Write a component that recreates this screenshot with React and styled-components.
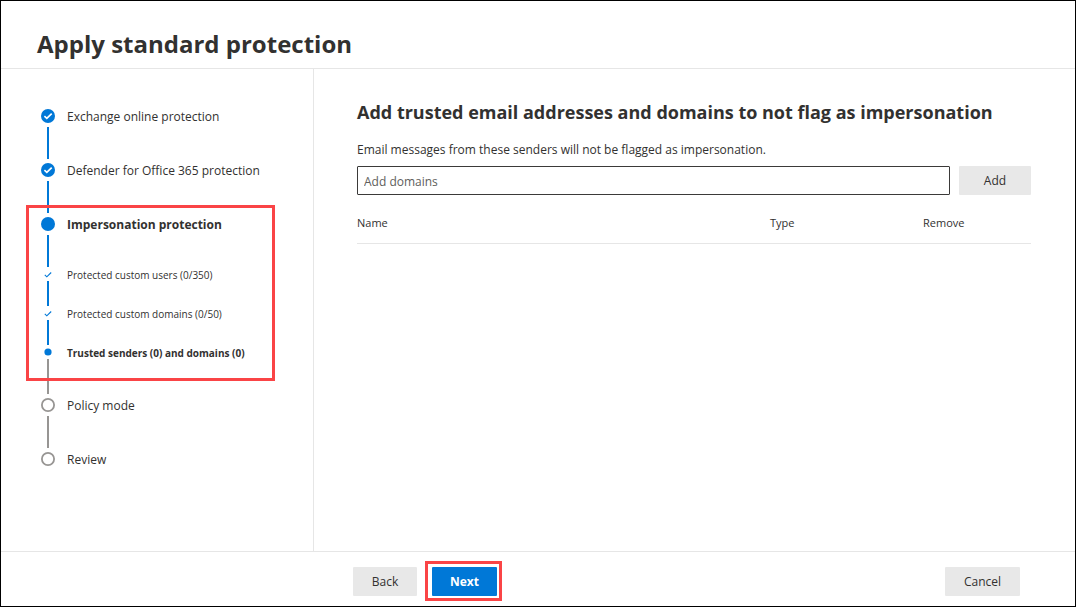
import React, { useState } from "react";
import styled, { createGlobalStyle } from "styled-components";

const colors = {
  text: "#323130",
  line: "#e6e6e6",
  primary: "#0078d7",
  pending: "#979593",
  button: "#e8e8e8",
  callout: "#fa4446",
};

const GlobalStyle = createGlobalStyle`
  *, *::before, *::after { box-sizing: border-box; }
  body {
    margin: 0;
    background: #fff;
    color: ${colors.text};
    font-family: "Segoe UI", "Open Sans", "Noto Sans", sans-serif;
    font-size: 12px;
    line-height: 16px;
  }
`;

const Frame = styled.div`
  min-height: 100vh;
  display: grid;
  grid-template-rows: auto 1fr auto;
  border: 1px solid #000;
`;

const Header = styled.header`
  padding: 27px 36px 8px;
  border-bottom: 1px solid ${colors.line};
`;

const Title = styled.h1`
  margin: 0;
  font-size: 24px;
  line-height: 32px;
  font-weight: 700;
`;

const Body = styled.div`
  display: grid;
  grid-template-columns: 313px minmax(0, 1fr);
`;

const Sidebar = styled.nav`
  padding: 36px 38px 36px 40px;
  border-right: 1px solid ${colors.line};
`;

const StepList = styled.ol`
  margin: 0;
  padding: 0;
  list-style: none;
`;

const StepItem = styled.li`
  position: relative;
`;

const StepRow = styled.div`
  display: flex;
  gap: 12px;
`;

const Rail = styled.div`
  width: 14px;
  display: flex;
  flex-direction: column;
  align-items: center;
`;

const Marker = styled.span`
  height: ${(p) => (p.$small ? 14 : 22)}px;
  display: grid;
  place-items: center;

  svg { display: block; }
`;

const Connector = styled.span`
  width: 2px;
  height: ${(p) => p.$length}px;
  background: ${(p) => (p.$pending ? colors.pending : colors.primary)};
`;

const StepLabel = styled.span`
  font-size: ${(p) => (p.$small ? 10 : 12)}px;
  line-height: ${(p) => (p.$small ? 16 : 24)}px;
  font-weight: ${(p) => (p.$current ? 700 : 400)};
  white-space: nowrap;
`;

const Callout = styled.span`
  position: absolute;
  inset: ${(p) => p.$inset};
  border: 3px solid ${colors.callout};
  pointer-events: none;
`;

const Content = styled.main`
  padding: 31px 44px 32px 43px;
`;

const Heading = styled.h2`
  margin: 0 0 17px;
  font-size: 18px;
  line-height: 24px;
  font-weight: 700;
`;

const FieldLabel = styled.label`
  display: block;
  margin-bottom: 8px;
  line-height: 17px;
`;

const FieldRow = styled.div`
  display: flex;
  gap: 9px;
`;

const TextField = styled.input`
  flex: 1;
  min-width: 0;
  height: 29px;
  padding: 2px 6px 0;
  border: 1px solid #3b3a39;
  border-radius: 1px;
  background: #fff;
  color: ${colors.text};
  font: inherit;

  &::placeholder { color: #605e5c; opacity: 1; }
`;

const Button = styled.button`
  width: ${(p) => p.$width}px;
  height: 29px;
  padding: 0;
  border: 0;
  border-radius: 1px;
  background: ${(p) => (p.$primary ? colors.primary : colors.button)};
  color: ${(p) => (p.$primary ? "#fff" : colors.text)};
  font-family: inherit;
  font-size: 12px;
  line-height: 16px;
  font-weight: ${(p) => (p.$primary ? 700 : 500)};
  cursor: pointer;
`;

const Table = styled.table`
  width: 100%;
  margin-top: 8px;
  border-collapse: collapse;
  table-layout: fixed;
`;

const ColumnHead = styled.th`
  width: ${(p) => p.$width};
  height: 40px;
  padding: 0;
  border-bottom: 1px solid ${colors.line};
  font-size: 11px;
  font-weight: 400;
  text-align: left;
`;

const Footer = styled.footer`
  display: flex;
  align-items: center;
  gap: 15px;
  padding: 15px 55px 10px 352px;
  border-top: 1px solid ${colors.line};
`;

const ButtonSlot = styled.span`
  position: relative;
  display: flex;
  margin-left: ${(p) => (p.$end ? "auto" : "0")};
`;

function MarkerIcon({ state, small }) {
  if (small && state === "done") {
    return (
      <svg width="8" height="8" viewBox="0 0 8 8" fill="none" aria-hidden="true">
        <path d="M0.8 4.9 2.8 6.8 7.2 2.5" stroke={colors.primary} strokeWidth="1.1" />
      </svg>
    );
  }
  if (small) {
    return (
      <svg width="8" height="8" viewBox="0 0 8 8" aria-hidden="true">
        <circle cx="4" cy="4" r="3.6" fill={colors.primary} />
      </svg>
    );
  }
  return (
    <svg width="14" height="14" viewBox="0 0 14 14" fill="none" aria-hidden="true">
      {state === "pending" ? (
        <circle cx="7" cy="7" r="6.1" stroke={colors.pending} strokeWidth="1.8" />
      ) : (
        <circle cx="7" cy="7" r="7" fill={colors.primary} />
      )}
      {state === "done" && (
        <path d="M3.4 7.2 5.8 9.3 10.7 4.6" stroke="#fff" strokeWidth="1.7" />
      )}
    </svg>
  );
}

function Step({ label, state, small, length, pendingLine }) {
  const current = state === "current";
  return (
    <StepRow>
      <Rail>
        <Marker $small={small}>
          <MarkerIcon state={state} small={small} />
        </Marker>
        {length > 0 && <Connector $length={length} $pending={pendingLine} />}
      </Rail>
      <StepLabel $small={small} $current={current} aria-current={current ? "step" : undefined}>
        {label}
      </StepLabel>
    </StepRow>
  );
}

export default function App() {
  const [entry, setEntry] = useState("");

  return (
    <>
      <GlobalStyle />
      <Frame>
        <Header>
          <Title>Apply standard protection</Title>
        </Header>
        <Body>
          <Sidebar aria-label="Steps">
            <StepList>
              <StepItem>
                <Step label="Exchange online protection" state="done" length={32} />
              </StepItem>
              <StepItem>
                <Step label="Defender for Office 365 protection" state="done" length={32} />
              </StepItem>
              <StepItem>
                <Step label="Impersonation protection" state="current" length={32} />
                <StepList>
                  <StepItem>
                    <Step small label="Protected custom users (0/350)" state="done" length={25} />
                  </StepItem>
                  <StepItem>
                    <Step small label="Protected custom domains (0/50)" state="done" length={25} />
                  </StepItem>
                  <StepItem>
                    <Step
                      small
                      label="Trusted senders (0) and domains (0)"
                      state="current"
                      length={35}
                      pendingLine
                    />
                  </StepItem>
                </StepList>
                <Callout $inset="-8px 0 13px -15px" />
              </StepItem>
              <StepItem>
                <Step label="Policy mode" state="pending" length={32} pendingLine />
              </StepItem>
              <StepItem>
                <Step label="Review" state="pending" length={0} />
              </StepItem>
            </StepList>
          </Sidebar>
          <Content>
            <Heading>Add trusted email addresses and domains to not flag as impersonation</Heading>
            <FieldLabel htmlFor="domains">
              Email messages from these senders will not be flagged as impersonation.
            </FieldLabel>
            <FieldRow>
              <TextField
                id="domains"
                type="text"
                placeholder="Add domains"
                value={entry}
                onChange={(e) => setEntry(e.target.value)}
              />
              <Button type="button" $width={72}>Add</Button>
            </FieldRow>
            <Table>
              <thead>
                <tr>
                  <ColumnHead scope="col">Name</ColumnHead>
                  <ColumnHead scope="col" $width="153px">Type</ColumnHead>
                  <ColumnHead scope="col" $width="108px">Remove</ColumnHead>
                </tr>
              </thead>
            </Table>
          </Content>
        </Body>
        <Footer>
          <Button type="button" $width={64}>Back</Button>
          <ButtonSlot>
            <Button type="button" $width={65} $primary>Next</Button>
            <Callout $inset="-6px -5px -5px -7px" />
          </ButtonSlot>
          <ButtonSlot $end>
            <Button type="button" $width={75}>Cancel</Button>
          </ButtonSlot>
        </Footer>
      </Frame>
    </>
  );
}
